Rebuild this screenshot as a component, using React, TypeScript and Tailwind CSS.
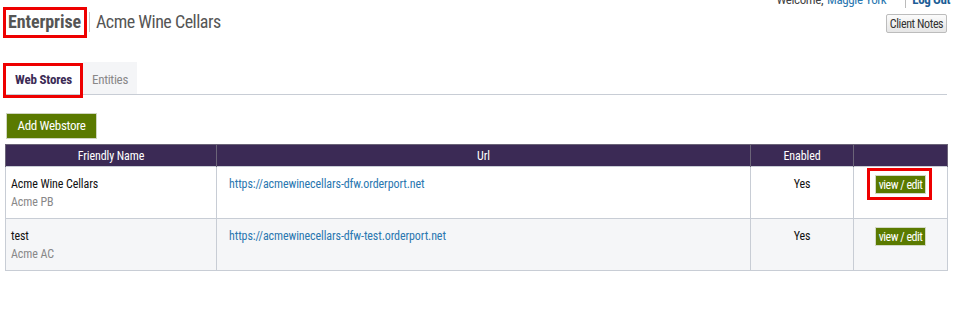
import { ReactNode } from "react";

const FONT = "font-['Roboto_Condensed','Roboto',sans-serif]";

type Store = { name: string; sub: string; url: string; enabled: string; marked?: boolean };

const stores: Store[] = [
  { name: "Acme Wine Cellars", sub: "Acme PB", url: "https://acmewinecellars-dfw.orderport.net", enabled: "Yes", marked: true },
  { name: "test", sub: "Acme AC", url: "https://acmewinecellars-dfw-test.orderport.net", enabled: "Yes" },
];

// red annotation frame drawn over an element
function Marked({ on, inset, children }: { on?: boolean; inset: string; children: ReactNode }) {
  return (
    <span className="relative inline-block">
      {children}
      {on && <span className={`pointer-events-none absolute border-[3px] border-[#ee0000] ${inset}`} />}
    </span>
  );
}

export default function App() {
  return (
    <div className={`w-[970px] h-[309px] overflow-hidden bg-white ${FONT}`}>
      <div className="w-[947px]">
        {/* ── Header ── */}
        <div className="flex justify-between">
          <div className="flex items-center pt-[8px] pl-[8px]">
            <Marked on inset="-left-[5px] -right-[6px] -top-[1px] -bottom-[2px]">
              <span className="block text-[18px] leading-[28px] font-bold tracking-[-0.1px] text-[#555]">Enterprise</span>
            </Marked>
            <span className="ml-[8px] mr-[6px] h-[20px] border-l border-[#c8c8c8]" />
            <span className="text-[18px] leading-[28px] tracking-[-0.5px] text-[#555]">Acme Wine Cellars</span>
          </div>
          <div className="flex flex-col items-end">
            <div className="-mt-[8px] -mr-[3px] flex items-center text-[13px] leading-[16px] tracking-[-0.4px]">
              <span className="text-[#444]">Welcome,</span>
              <a className="ml-[4px] text-[#2a77b0]">Maggie York</a>
              <span className="ml-[19px] h-[16px] border-l border-[#bbb]" />
              <a className="ml-[6px] font-bold text-[#1d5e96]">Log Out</a>
            </div>
            <button className="mt-[6px] h-[19px] w-[61px] rounded-[2px] border border-[#bcbcbc] bg-gradient-to-b from-[#fbfbfb] to-[#e6e6e6] text-[12px] leading-[16px] tracking-[-0.4px] text-[#333]">
              Client Notes
            </button>
          </div>
        </div>

        {/* ── Tabs ── */}
        <div className="mt-[25px] ml-[5px] flex items-end border-b border-[#c8cdd5]">
          <Marked on inset="-left-[2px] -right-[1px] top-[2px] -bottom-[4px]">
            <span className="block h-[33px] w-[77px] bg-white pt-[9px] text-center text-[13px] font-bold tracking-[-0.2px] text-[#3b2a55]">
              Web Stores
            </span>
          </Marked>
          <span className="ml-[1px] block h-[32px] w-[54px] bg-[#f4f5f7] pt-[8px] text-center text-[13px] tracking-[-0.3px] text-[#888]">
            Entities
          </span>
        </div>

        {/* ── Add button ── */}
        <button className="mt-[18px] ml-[6px] block h-[26px] w-[91px] border border-[#cfd6c0] bg-[#5a7a00] text-[13px] tracking-[-0.3px] text-white">
          Add Webstore
        </button>

        {/* ── Table ── */}
        <table className="mt-[5px] ml-[5px] w-[942px] table-fixed border-collapse text-[12px] tracking-[-0.1px]">
          <colgroup>
            <col className="w-[211px]" />
            <col className="w-[534px]" />
            <col className="w-[103px]" />
            <col className="w-[94px]" />
          </colgroup>
          <thead>
            <tr className="h-[22px] bg-[#3b2a55] text-white">
              <th className="border-x border-t border-[#6b6478] font-normal">Friendly Name</th>
              <th className="border-x border-t border-[#6b6478] font-normal">Url</th>
              <th className="border-x border-t border-[#6b6478] font-normal">Enabled</th>
              <th className="border-x border-t border-[#6b6478] font-normal"></th>
            </tr>
          </thead>
          <tbody>
            {stores.map((s, i) => (
              <tr key={s.url} className={`h-[52px] align-top ${i % 2 ? "bg-[#f5f6f8]" : "bg-white"}`}>
                <td className="border border-[#c8cdd5] px-[5px] pt-[8px] leading-[18px]">
                  <div className="text-[#111]">{s.name}</div>
                  <div className="text-[#888]">{s.sub}</div>
                </td>
                <td className="border border-[#c8cdd5] pl-[12px] pt-[8px] leading-[18px]">
                  <a className="text-[#2a77b0]">{s.url}</a>
                </td>
                <td className="border border-[#c8cdd5] pt-[8px] text-center leading-[18px] text-[#111]">{s.enabled}</td>
                <td className="border border-[#c8cdd5] pt-[8px] text-center">
                  <Marked on={s.marked} inset="-left-[8px] -right-[6px] -top-[7px] -bottom-[6px]">
                    <button className="block h-[19px] w-[51px] whitespace-nowrap border border-[#d3d9c6] bg-[#5a7a00] text-[12px] leading-[16px] tracking-[-0.5px] text-white">
                      view / edit
                    </button>
                  </Marked>
                </td>
              </tr>
            ))}
          </tbody>
        </table>
      </div>
    </div>
  );
}
